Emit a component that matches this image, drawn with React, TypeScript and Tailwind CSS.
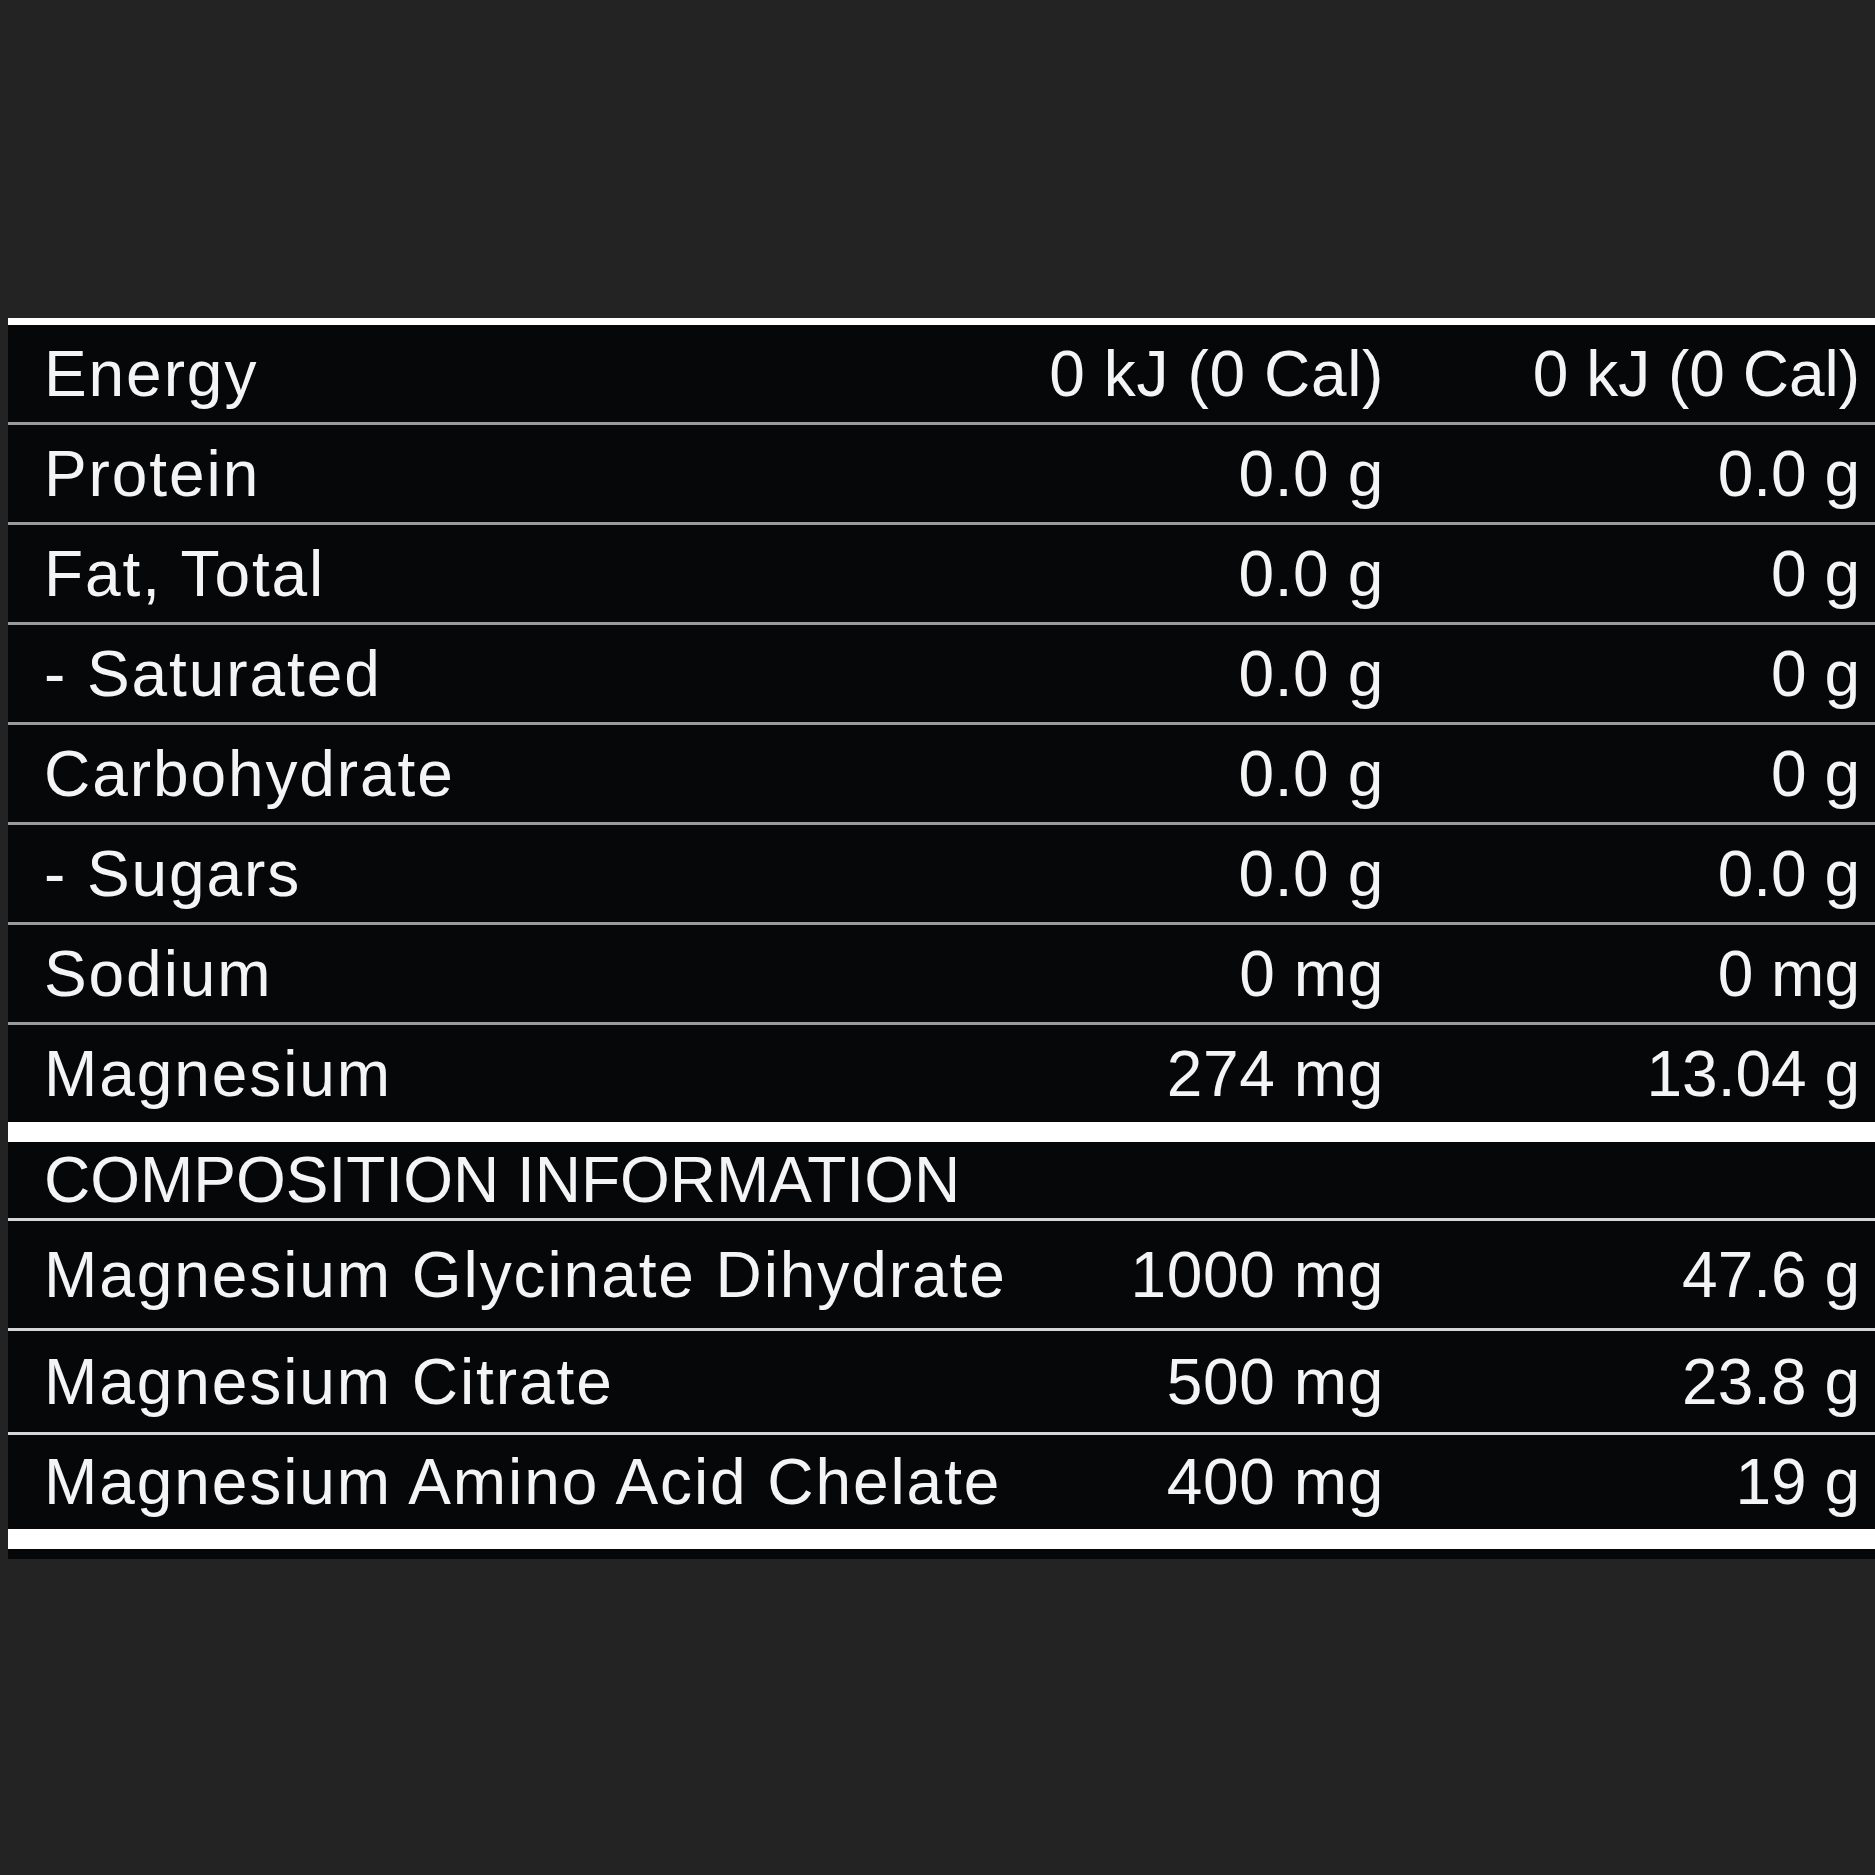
import React from 'react';

type Row = { label: string; serve: string; per100: string };

const nutrition: Row[] = [
  { label: 'Energy', serve: '0 kJ (0 Cal)', per100: '0 kJ (0 Cal)' },
  { label: 'Protein', serve: '0.0 g', per100: '0.0 g' },
  { label: 'Fat, Total', serve: '0.0 g', per100: '0 g' },
  { label: '- Saturated', serve: '0.0 g', per100: '0 g' },
  { label: 'Carbohydrate', serve: '0.0 g', per100: '0 g' },
  { label: '- Sugars', serve: '0.0 g', per100: '0.0 g' },
  { label: 'Sodium', serve: '0 mg', per100: '0 mg' },
  { label: 'Magnesium', serve: '274 mg', per100: '13.04 g' },
];

// heights include the 3px separator under each row
const composition: (Row & { h: string })[] = [
  { label: 'Magnesium Glycinate Dihydrate', serve: '1000 mg', per100: '47.6 g', h: 'h-[110px] border-b-[3px]' },
  { label: 'Magnesium Citrate', serve: '500 mg', per100: '23.8 g', h: 'h-[104px] border-b-[3px]' },
  { label: 'Magnesium Amino Acid Chelate', serve: '400 mg', per100: '19 g', h: 'h-[94px]' },
];

function TableRow({ row, className }: { row: Row; className: string }) {
  return (
    <div className={`grid grid-cols-[1fr_360px_476px] items-center pl-9 pr-[15px] ${className}`}>
      <span className="whitespace-nowrap tracking-[0.03em]">{row.label}</span>
      <span className="whitespace-nowrap text-right tracking-[0.01em]">{row.serve}</span>
      <span className="whitespace-nowrap text-right">{row.per100}</span>
    </div>
  );
}

export default function App() {
  return (
    <div className="min-h-[1875px] w-[1875px] bg-[#232323] pt-[318px] pl-2 font-['Liberation_Sans',Arial,sans-serif] text-[64px] leading-none text-[#f4f4f4]">
      <div className="flex flex-col bg-[#050709] pb-[10px]">
        <div className="h-[7px] bg-white" />
        {nutrition.map((row, i) => (
          <TableRow
            key={row.label}
            row={row}
            className={i < nutrition.length - 1 ? 'h-[100px] border-b-[3px] border-[#9a9a9a]' : 'h-[97px]'}
          />
        ))}
        <div className="h-[20px] bg-white" />
        <div className="flex h-[79px] items-center border-b-[3px] border-[#d6d6d6] pl-9">
          <span>COMPOSITION INFORMATION</span>
        </div>
        {composition.map((row) => (
          <TableRow key={row.label} row={row} className={`${row.h} border-[#d6d6d6]`} />
        ))}
        <div className="h-[20px] bg-white" />
      </div>
    </div>
  );
}
